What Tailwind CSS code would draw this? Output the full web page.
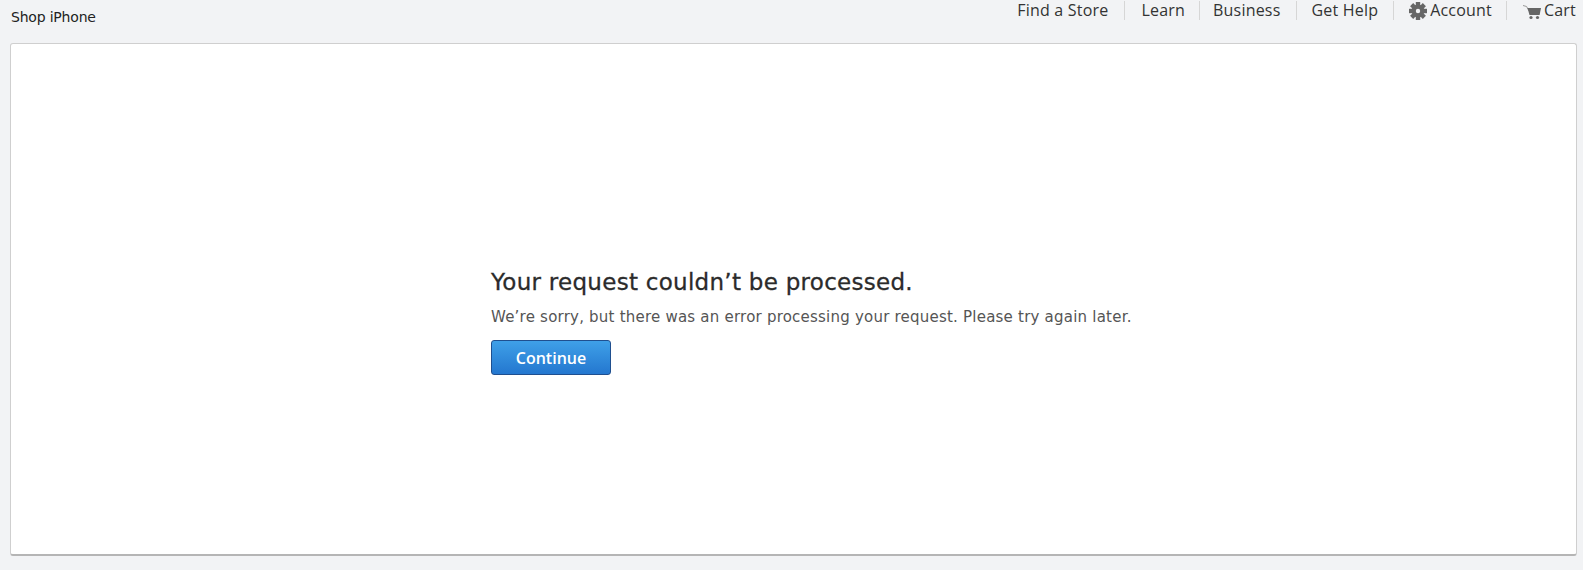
<!DOCTYPE html>
<html lang="en">
<head>
<meta charset="utf-8">
<title>Shop iPhone</title>
<script src="https://cdn.jsdelivr.net/npm/@tailwindcss/browser@4"></script>
</head>
<body class="bg-[#f2f3f5] h-[570px] overflow-hidden font-['DejaVu_Sans',sans-serif]">
  <header class="h-[43px] flex justify-between items-start pl-[11px] pr-[7px]">
    <span class="mt-[8px] text-[14px] leading-[18px] tracking-[-0.2px] text-[#222]">Shop iPhone</span>
    <nav class="flex items-start pt-[1px] font-['Open_Sans',sans-serif] text-[16px] leading-[19px] tracking-[0.2px] text-[#333]">
      <a class="h-[19px] pr-[16px] border-r border-[#d6d6d6]">Find a Store</a>
      <a class="h-[19px] pl-[16px] pr-[14px] border-r border-[#d6d6d6]">Learn</a>
      <a class="h-[19px] pl-[13px] pr-[16px] border-r border-[#d6d6d6]">Business</a>
      <a class="h-[19px] pl-[14px] pr-[15px] border-r border-[#d6d6d6]">Get Help</a>
      <a class="h-[19px] pl-[15px] pr-[14px] border-r border-[#d6d6d6] flex items-center gap-[3px]">
        <svg class="w-[18px] h-[18px]" viewBox="0 0 18 18" fill="#666">
          <path fill-rule="evenodd" d="M9 2.6a6.4 6.4 0 1 0 0 12.8A6.4 6.4 0 0 0 9 2.6zm0 4.2a2.2 2.2 0 1 1 0 4.4 2.2 2.2 0 0 1 0-4.4z"/>
          <rect x="6.8" y="0" width="4.4" height="4"/>
          <rect x="6.8" y="14" width="4.4" height="4"/>
          <rect x="0" y="6.8" width="4" height="4.4"/>
          <rect x="14" y="6.8" width="4" height="4.4"/>
          <rect x="6.8" y="0" width="4.4" height="4" transform="rotate(45 9 9)"/>
          <rect x="6.8" y="14" width="4.4" height="4" transform="rotate(45 9 9)"/>
          <rect x="0" y="6.8" width="4" height="4.4" transform="rotate(45 9 9)"/>
          <rect x="14" y="6.8" width="4" height="4.4" transform="rotate(45 9 9)"/>
        </svg>
        <span>Account</span>
      </a>
      <a class="h-[19px] pl-[16px] flex items-center gap-[3px]">
        <svg class="w-[18px] h-[16px] mt-[3px]" viewBox="0 0 18 16">
          <path d="M0 1.5l3.6 1L6 7" fill="none" stroke="#999" stroke-width="1"/>
          <path d="M4.5 4H18l-1.4 7H6.5z" fill="#666"/>
          <circle cx="8" cy="13.5" r="1.6" fill="#666"/>
          <circle cx="14.5" cy="13.5" r="1.6" fill="#666"/>
        </svg>
        <span>Cart</span>
      </a>
    </nav>
  </header>

  <main class="ml-[10px] mr-[6px] h-[513px] bg-white rounded-[3px] border border-[#cfcfcf] border-b-2 border-b-[#b5b5b5] flex flex-col pl-[480px] pt-[224px]">
    <h1 class="text-[23px] leading-[28px] tracking-[0.28px] font-normal text-[#2b2b2b] [-webkit-text-stroke:0.3px_#2b2b2b]">Your request couldn’t be processed.</h1>
    <p class="mt-[11px] text-[15px] leading-[20px] tracking-[0.22px] text-[#555]">We’re sorry, but there was an error processing your request. Please try again later.</p>
    <button class="mt-[13px] w-[120px] h-[35px] rounded-[3px] border border-[#1f4f8f] bg-gradient-to-b from-[#3fa0e8] to-[#2477cf] text-white text-[16px] font-['Open_Sans',sans-serif] font-semibold">Continue</button>
  </main>
</body>
</html>
